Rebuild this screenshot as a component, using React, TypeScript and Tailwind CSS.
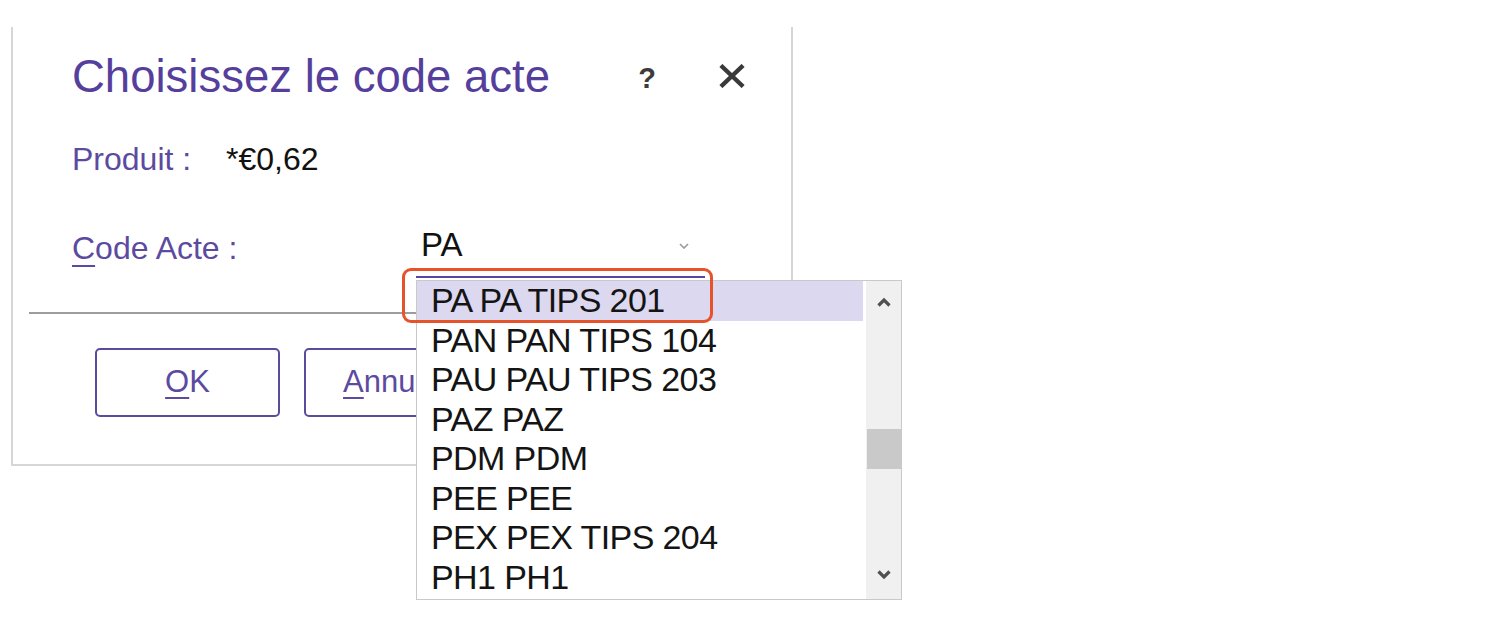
import React from "react";

const items = [
  "PA PA TIPS 201",
  "PAN PAN TIPS 104",
  "PAU PAU TIPS 203",
  "PAZ PAZ",
  "PDM PDM",
  "PEE PEE",
  "PEX PEX TIPS 204",
  "PH1 PH1",
];

export default function App() {
  return (
    <div className="relative w-[1508px] h-[630px] bg-white overflow-hidden font-['Liberation_Sans',Arial,sans-serif]">
      <div className="ml-[11px] mt-[27px] w-[782px] h-[439px] border-l-2 border-r-2 border-b-2 border-[#d6d6d6] flex flex-col">
        {/* Title row */}
        <div className="mt-[24px] h-[52px] flex items-center pl-[59px] pr-[46px]">
          <div className="text-[45.5px] leading-[52px] text-[#563f9c]">
            Choisissez le code acte
          </div>
          <div className="ml-auto flex items-center gap-[63px]">
            <span className="text-[29px] font-bold text-[#3c3c3c] leading-none mt-[2px]">?</span>
            <svg width="26" height="24" viewBox="0 0 26 24" className="mt-[-2px]">
              <path d="M3.5 3 L22.5 21 M22.5 3 L3.5 21" stroke="#3a3a3a" strokeWidth="4.4" strokeLinecap="square" />
            </svg>
          </div>
        </div>

        {/* Produit row */}
        <div className="mt-[38px] h-[36px] flex items-start pl-[59px]">
          <span className="w-[154px] text-[32px] leading-[36px] text-[#5c4aa0]">Produit :</span>
          <span className="text-[32px] leading-[36px] text-[#111]">*€0,62</span>
        </div>

        {/* Code acte row */}
        <div className="mt-[50px] flex items-start pl-[59px]">
          <span className="w-[344px] pt-[3px] text-[32px] leading-[36px] text-[#5c4aa0]">
            <span className="underline underline-offset-[6px] decoration-[1.5px]">C</span>ode Acte :
          </span>
          <div className="relative w-[289px] h-[51px] border-b-2 border-[#5b45a0] flex items-start">
            <span className="pl-[5px] text-[33px] leading-[36px] text-[#111]">PA</span>
            <svg width="10" height="6" viewBox="0 0 10 6" className="absolute right-[16px] top-[16px]">
              <path d="M1 1 L5 5 L9 1" stroke="#9a9a9a" strokeWidth="1.6" fill="none" />
            </svg>

            {/* Dropdown list */}
            <div className="absolute left-0 top-[53px] z-10 w-[486px] h-[320px] border border-[#c9c9c9] bg-white flex">
              <div className="w-[449px] flex flex-col">
                {items.map((it, i) => (
                  <div
                    key={it}
                    className={
                      i === 0
                        ? "h-[39.5px] mr-[3px] pl-[14px] bg-[#dcd8ef] text-[34px] tracking-[-0.6px] leading-[39.5px] text-[#141414] whitespace-nowrap"
                        : "h-[39.5px] pl-[14px] text-[34px] tracking-[-0.6px] leading-[39.5px] text-[#141414] whitespace-nowrap"
                    }
                  >
                    {it}
                  </div>
                ))}
              </div>
              <div className="w-[35px] bg-[#f0f0f0] flex flex-col items-center">
                <svg width="16" height="11" viewBox="0 0 16 11" className="mt-[16px]">
                  <path d="M2.5 8.5 L8 3 L13.5 8.5" stroke="#505050" strokeWidth="3.2" fill="none" />
                </svg>
                <div className="mt-[121px] w-[34px] h-[40px] bg-[#c9c9c9]" />
                <svg width="16" height="11" viewBox="0 0 16 11" className="mt-[100px]">
                  <path d="M2.5 2.5 L8 8 L13.5 2.5" stroke="#505050" strokeWidth="3.2" fill="none" />
                </svg>
              </div>
            </div>

            {/* Annotation highlight */}
            <div className="absolute left-[-14px] top-[41px] z-20 w-[311px] h-[55px] border-[3px] border-[#e6532b] rounded-[9px]" />
          </div>
        </div>

        {/* Separator */}
        <div className="mt-[34px] mx-[16px] h-[1.5px] bg-[#9c9c9c]" />

        {/* Buttons */}
        <div className="mt-[34px] flex gap-[24px] pl-[82px]">
          <button className="w-[185px] h-[69px] border-2 border-[#5c4b9c] rounded-[5px] text-[31px] text-[#5c4aa0] bg-white">
            <span className="underline underline-offset-[5px] decoration-[1.5px]">O</span>K
          </button>
          <button className="w-[185px] h-[69px] border-2 border-[#5c4b9c] rounded-[5px] text-[31px] text-[#5c4aa0] bg-white">
            <span className="underline underline-offset-[5px] decoration-[1.5px]">A</span>nnuler
          </button>
        </div>
      </div>
    </div>
  );
}
